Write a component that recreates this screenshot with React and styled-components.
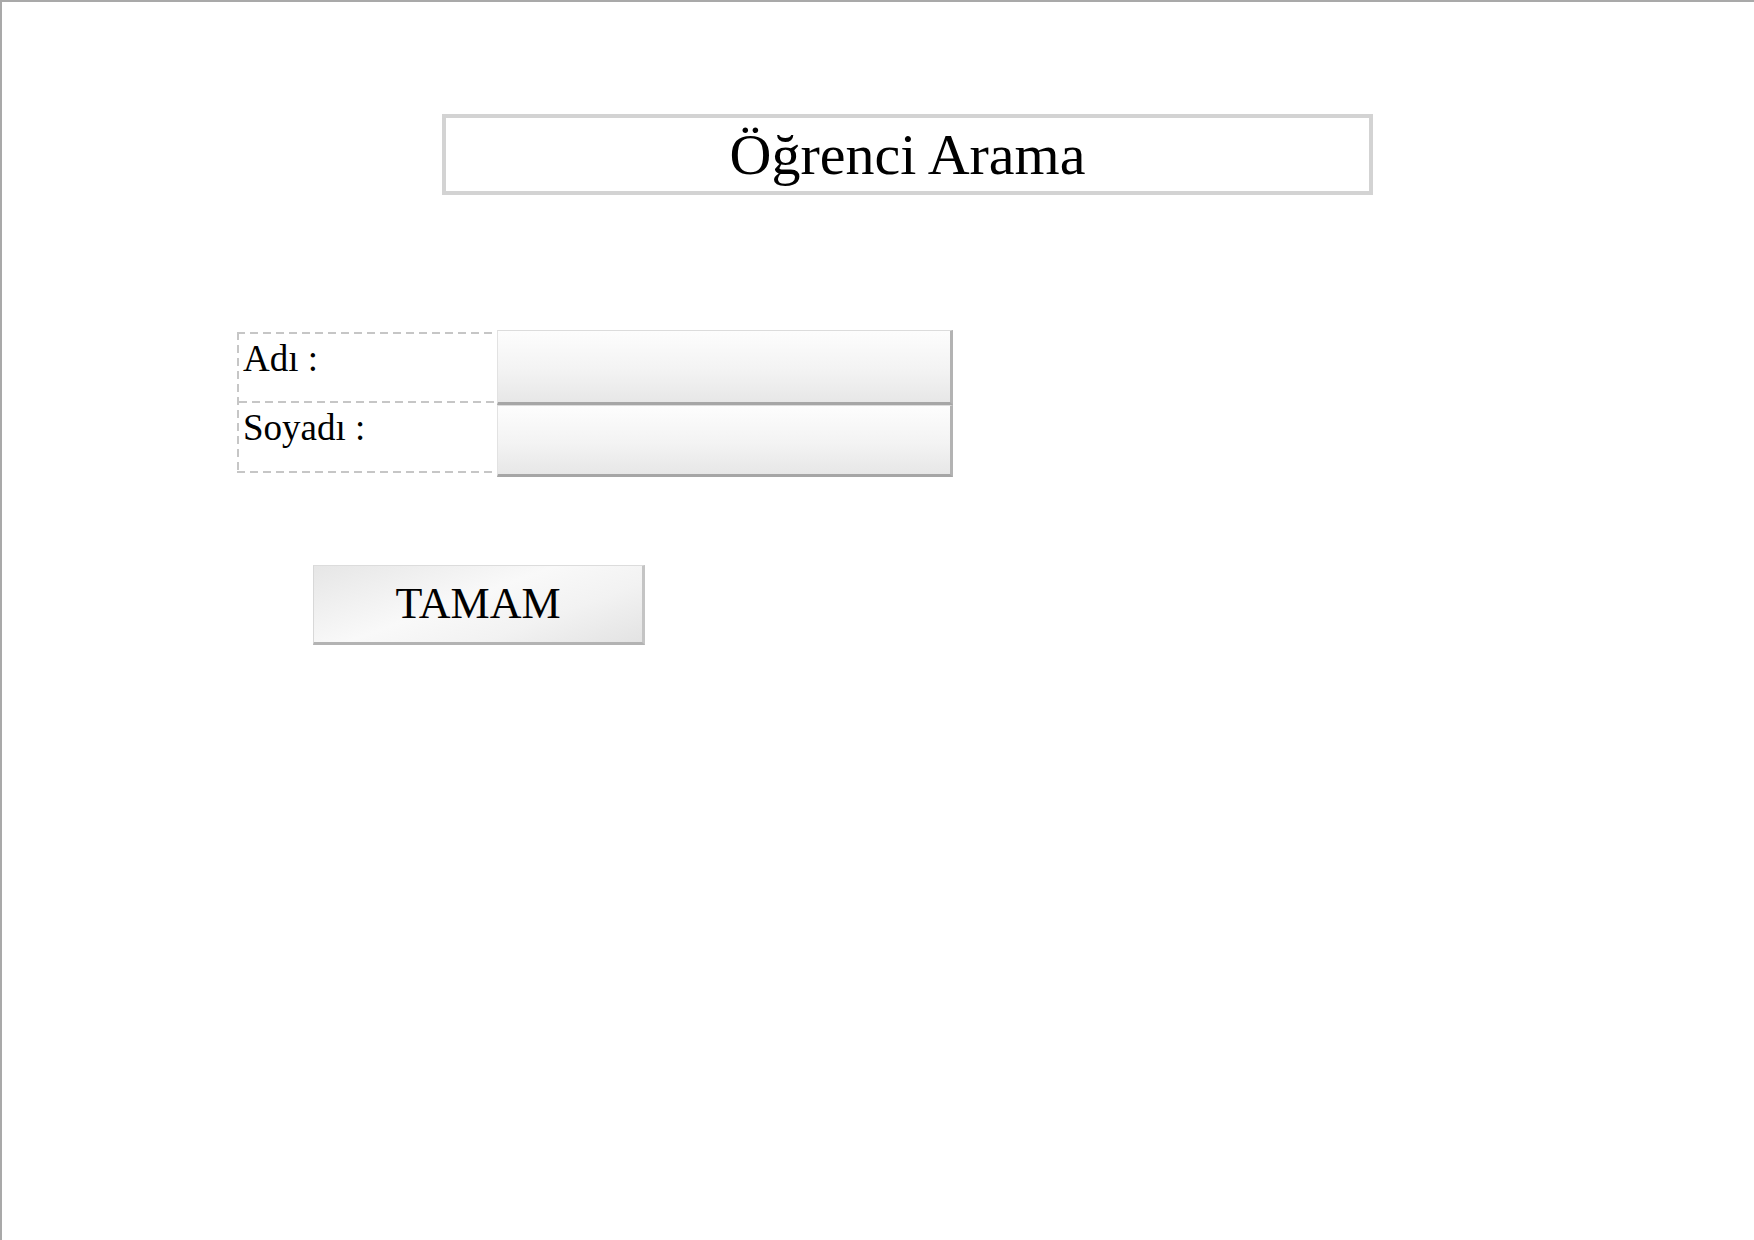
import styled, { createGlobalStyle } from 'styled-components';

const GlobalStyle = createGlobalStyle`
  html, body {
    margin: 0;
    padding: 0;
    background: #ffffff;
  }
  body {
    font-family: "Liberation Serif", "Times New Roman", serif;
    color: #000000;
  }
`;

const dashX = 'repeating-linear-gradient(to right, #c6c6c6 0 8px, transparent 8px 13px)';
const dashY = 'repeating-linear-gradient(to bottom, #c6c6c6 0 8px, transparent 8px 13px)';

const Page = styled.div`
  box-sizing: border-box;
  width: 1754px;
  height: 1240px;
  border-top: 2px solid #a9a9a9;
  border-left: 2px solid #a9a9a9;
  padding: 112px 0 0 0;
  background: #ffffff;
  overflow: hidden;
`;

const TitleBox = styled.div`
  box-sizing: border-box;
  margin-left: 440px;
  width: 931px;
  height: 81px;
  border: 4px solid #d3d3d3;
  display: flex;
  align-items: center;
  justify-content: center;
  font-size: 58px;
  line-height: 1;
`;

const Form = styled.div`
  display: grid;
  grid-template-columns: 260px 456px;
  align-items: start;
  margin: 135px 0 0 235px;
`;

const LabelColumn = styled.div`
  display: flex;
  flex-direction: column;
  margin-top: 2px;
  padding: 2px 0 2px 2px;
  background:
    ${dashX} top left / 100% 2px no-repeat,
    ${dashX} bottom left / 100% 2px no-repeat,
    ${dashY} top left / 2px 100% no-repeat;
`;

const LabelCell = styled.div`
  box-sizing: border-box;
  height: ${(p) => p.$h}px;
  padding: ${(p) => (p.$divider ? 8 : 6)}px 0 0 4px;
  font-size: 37px;
  line-height: 1;
  background: ${(p) => (p.$divider ? `${dashX} top left / 100% 2px no-repeat` : 'none')};
`;

const InputColumn = styled.div`
  display: flex;
  flex-direction: column;
`;

const Input = styled.div`
  box-sizing: border-box;
  height: ${(p) => p.$h}px;
  background: linear-gradient(to bottom, #fdfdfd 0%, #f3f3f3 55%, #e7e7e7 100%);
  border-top: 1px solid #dcdcdc;
  border-left: 1px solid #e2e2e2;
  border-right: 3px solid #b3b3b3;
  border-bottom: 3px solid #a6a6a6;
`;

const Button = styled.button`
  box-sizing: border-box;
  display: flex;
  align-items: center;
  justify-content: center;
  margin: 88px 0 0 311px;
  width: 332px;
  height: 80px;
  padding: 0;
  font-family: "Liberation Serif", "Times New Roman", serif;
  font-size: 44px;
  line-height: 1;
  color: #000000;
  background: linear-gradient(160deg, #e6e6e6 0%, #f9f9f9 45%, #f2f2f2 70%, #e3e3e3 100%);
  border-top: 1px solid #dcdcdc;
  border-left: 1px solid #d8d8d8;
  border-right: 3px solid #c4c4c4;
  border-bottom: 3px solid #b3b3b3;
  cursor: pointer;
`;

export default function App() {
  return (
    <>
      <GlobalStyle />
      <Page>
        <TitleBox>Öğrenci Arama</TitleBox>

        <Form>
          <LabelColumn>
            <LabelCell $h={67}>Adı :</LabelCell>
            <LabelCell $h={70} $divider>Soyadı :</LabelCell>
          </LabelColumn>
          <InputColumn>
            <Input $h={75} />
            <Input $h={72} />
          </InputColumn>
        </Form>

        <Button type="button">TAMAM</Button>
      </Page>
    </>
  );
}
